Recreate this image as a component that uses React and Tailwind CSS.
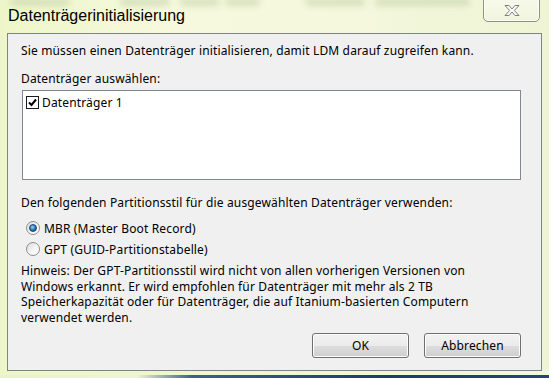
import React from "react";

const font = { fontFamily: '"Noto Sans", "Liberation Sans", Arial, sans-serif' };
const titleFont = { fontFamily: '"Liberation Sans", Arial, sans-serif' };

function CloseGlyph() {
  return (
    <svg width="18" height="13" viewBox="0 0 18 13">
      <path
        d="M2 1.5 H6 L9 5 L12 1.5 H16 L11.3 6.5 L16 11.5 H12 L9 8 L6 11.5 H2 L6.7 6.5 Z"
        fill="#fafafa"
        stroke="#7d7d7d"
        strokeWidth="1"
        strokeLinejoin="round"
      />
    </svg>
  );
}

function Radio({ checked }) {
  return (
    <span className="relative w-[14px] h-[14px] rounded-full border border-[#8e8f8f] bg-gradient-to-br from-[#d9d9d9] via-[#f4f4f4] to-[#ffffff] flex items-center justify-center shrink-0">
      {checked && (
        <span className="w-[8px] h-[8px] rounded-full bg-[radial-gradient(circle_at_40%_35%,#8fd4f7_0%,#2b7fc0_50%,#0b3f76_100%)] border border-[#1c3f6a]" />
      )}
    </span>
  );
}

function Button({ children }) {
  return (
    <div className="w-[97px] h-[25px] rounded-[3px] border border-[#707070] bg-[linear-gradient(#f2f2f2_0%,#ebebeb_50%,#dddddd_51%,#cfcfcf_100%)] shadow-[inset_0_0_0_1px_#fcfcfc] flex items-center justify-center text-[12px] text-black">
      {children}
    </div>
  );
}

export default function App() {
  return (
    <div
      className="relative w-[549px] h-[378px] overflow-hidden flex flex-col bg-[linear-gradient(90deg,#eef6c9_0%,#f6f9dc_30%,#f5f8dd_60%,#eef4d4_100%)]"
      style={font}
    >
      {/* blurred shapes behind the glass */}
      <div className="absolute left-[10px] top-[-2px] w-[60px] h-[8px] rounded-full bg-[#c9d6b0] blur-[3px] opacity-70" />
      <div className="absolute left-[120px] top-[-2px] w-[50px] h-[8px] rounded-full bg-[#c9d6b0] blur-[3px] opacity-70" />
      <div className="absolute left-[180px] top-[-2px] w-[40px] h-[8px] rounded-full bg-[#c9d6b0] blur-[3px] opacity-70" />
      <div className="absolute left-[225px] top-[-2px] w-[35px] h-[8px] rounded-full bg-[#c9d6b0] blur-[3px] opacity-70" />
      <div className="absolute left-[305px] top-[-2px] w-[60px] h-[8px] rounded-full bg-[#c9d6b0] blur-[3px] opacity-70" />
      <div className="absolute left-[375px] top-[-2px] w-[95px] h-[8px] rounded-full bg-[#c9d6b0] blur-[3px] opacity-70" />

      {/* title bar */}
      <div className="relative h-[33px] shrink-0 flex items-start">
        <div className="mt-[6px] ml-[8px] text-[16px] leading-[20px] text-black" style={titleFont}>
          Datenträgerinitialisierung
        </div>
        <div className="ml-auto mr-[9px] mt-[-4px] w-[57px] h-[26px] rounded-b-[5px] border border-[#8e9486] bg-[linear-gradient(#ffffff80,#f1f5e0c0)] shadow-[inset_0_0_0_1px_#ffffffa0] flex items-center justify-center pt-[3px]">
          <CloseGlyph />
        </div>
      </div>

      {/* client area */}
      <div className="mx-[7px] h-[338px] border border-[#7f8584] bg-[#f0f0f0] flex flex-col pl-[13px] pr-[20px] text-[12px] leading-[15px] tracking-[0.15px] text-black">
        <div className="mt-[9px] whitespace-nowrap">
          Sie müssen einen Datenträger initialisieren, damit LDM darauf zugreifen kann.
        </div>
        <div className="mt-[13px]">Datenträger auswählen:</div>
        <div className="mt-[4px] ml-[1px] h-[90px] border border-[#828790] bg-white flex flex-col pt-[4px] pl-[3px]">
          <div className="flex items-center gap-[3px]">
            <span className="w-[13px] h-[13px] border border-[#1c1c1c] bg-white flex items-center justify-center">
              <svg width="9" height="9" viewBox="0 0 9 9">
                <path d="M1 4.5 L3.5 7 L8 1.5" fill="none" stroke="#000" strokeWidth="2" />
              </svg>
            </span>
            <span>Datenträger 1</span>
          </div>
        </div>
        <div className="mt-[15px] whitespace-nowrap">
          Den folgenden Partitionsstil für die ausgewählten Datenträger verwenden:
        </div>
        <div className="mt-[10px] ml-[5px] flex items-center gap-[4px] h-[16px]">
          <Radio checked />
          <span>MBR (Master Boot Record)</span>
        </div>
        <div className="mt-[5px] ml-[5px] flex items-center gap-[4px] h-[16px]">
          <Radio />
          <span>GPT (GUID-Partitionstabelle)</span>
        </div>
        <div className="mt-[6px] leading-[15.5px] whitespace-nowrap">
          Hinweis: Der GPT-Partitionsstil wird nicht von allen vorherigen Versionen von
          <br />
          Windows erkannt. Er wird empfohlen für Datenträger mit mehr als 2 TB
          <br />
          Speicherkapazität oder für Datenträger, die auf Itanium-basierten Computern
          <br />
          verwendet werden.
        </div>
        <div className="mt-[8px] flex justify-end gap-[15px]">
          <Button>OK</Button>
          <Button>Abbrechen</Button>
        </div>
      </div>
      <div className="flex-1 bg-[linear-gradient(90deg,#e9f2c8_0%,#eef3d8_25%,#3d5f8a_35%,#1f3a6b_70%,#26447a_100%)]">
        <div className="h-[4px] bg-[linear-gradient(90deg,#eef6c9,#f3f7dc)]" />
      </div>
    </div>
  );
}
